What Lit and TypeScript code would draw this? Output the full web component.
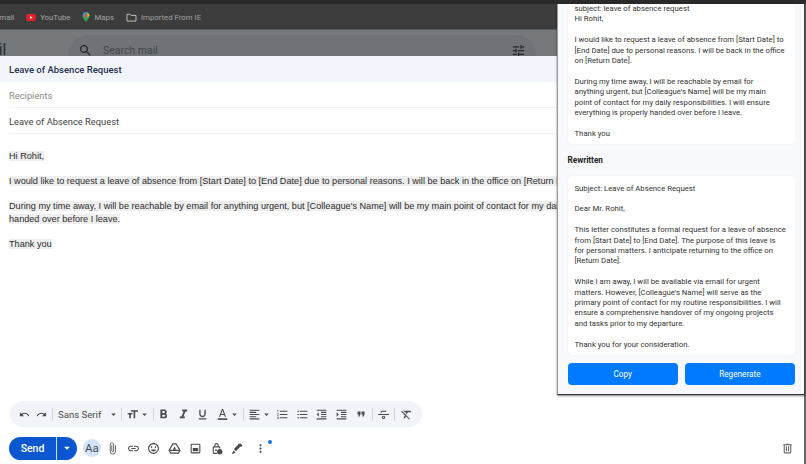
import { LitElement, html, css, svg } from "lit";
import { customElement } from "lit/decorators.js";

const icons: Record<string, any> = {
  undo: svg`<path d="M12.5 8c-2.65 0-5.05.99-6.9 2.6L2 7v9h9l-3.62-3.62c1.39-1.16 3.16-1.88 5.12-1.88 3.54 0 6.55 2.31 7.6 5.5l2.37-.78C21.08 11.03 17.15 8 12.5 8z"/>`,
  redo: svg`<path d="M18.4 10.6C16.55 8.99 14.15 8 11.5 8c-4.65 0-8.58 3.03-9.96 7.22L3.9 16c1.05-3.19 4.05-5.5 7.6-5.5 1.95 0 3.73.72 5.12 1.88L13 16h9V7l-3.6 3.6z"/>`,
  size: svg`<path d="M9 4v3h5v12h3V7h5V4H9zm-6 8h3v7h3v-7h3V9H3v3z"/>`,
  bold: svg`<path d="M15.6 10.79c.97-.67 1.65-1.77 1.65-2.79 0-2.26-1.75-4-4-4H7v14h7.04c2.09 0 3.71-1.7 3.71-3.79 0-1.52-.86-2.82-2.15-3.42zM10 6.5h3c.83 0 1.5.67 1.5 1.5s-.67 1.5-1.5 1.5h-3v-3zm3.5 9H10v-3h3.5c.83 0 1.5.67 1.5 1.5s-.67 1.5-1.5 1.5z"/>`,
  italic: svg`<path d="M10 4v3h2.21l-3.42 8H6v3h8v-3h-2.21l3.42-8H18V4z"/>`,
  underline: svg`<path d="M12 17c3.31 0 6-2.69 6-6V3h-2.5v8c0 1.93-1.57 3.5-3.5 3.5S8.5 12.93 8.5 11V3H6v8c0 3.31 2.69 6 6 6zm-7 2v2h14v-2H5z"/>`,
  color: svg`<path d="M11 2L5.5 16h2.25l1.12-3h6.25l1.12 3h2.25L13 2h-2zm-1.38 9L12 4.67 14.38 11H9.62z"/><path d="M3 19h18v3H3z"/>`,
  align: svg`<path d="M15 15H3v2h12v-2zm0-8H3v2h12V7zM3 13h18v-2H3v2zm0 8h18v-2H3v2zM3 3v2h18V3H3z"/>`,
  numbered: svg`<path d="M2 17h2v.5H3v1h1v.5H2v1h3v-4H2v1zm1-9h1V4H2v1h1v3zm-1 3h1.8L2 13.1v.9h3v-1H3.2L5 10.9V10H2v1zm5-6v2h14V5H7zm0 14h14v-2H7v2zm0-6h14v-2H7v2z"/>`,
  bulleted: svg`<path d="M4 10.5c-.83 0-1.5.67-1.5 1.5s.67 1.5 1.5 1.5 1.5-.67 1.5-1.5-.67-1.5-1.5-1.5zm0-6c-.83 0-1.5.67-1.5 1.5S3.17 7.5 4 7.5 5.5 6.83 5.5 6 4.83 4.5 4 4.5zm0 12c-.83 0-1.5.68-1.5 1.5s.68 1.5 1.5 1.5 1.5-.68 1.5-1.5-.67-1.5-1.5-1.5zM7 19h14v-2H7v2zm0-6h14v-2H7v2zm0-8v2h14V5H7z"/>`,
  outdent: svg`<path d="M11 17h10v-2H11v2zm-8-5l4 4V8l-4 4zm0 9h18v-2H3v2zM3 3v2h18V3H3zm8 6h10V7H11v2zm0 4h10v-2H11v2z"/>`,
  indent: svg`<path d="M3 21h18v-2H3v2zM3 8v8l4-4-4-4zm8 9h10v-2H11v2zM3 3v2h18V3H3zm8 6h10V7H11v2zm0 4h10v-2H11v2z"/>`,
  quote: svg`<path d="M6 17h3l2-4V7H5v6h3zm8 0h3l2-4V7h-6v6h3z"/>`,
  strike: svg`<path d="M2 11h20v2H2z"/><path d="M7 5h10v2.5h-1.6V7H8.6v2H7zM9 15h6v2.5a3 3 0 0 1-6 0zm2 1.5v1a1 1 0 0 0 2 0v-1z"/>`,
  clear: svg`<path d="M3.27 5L2 6.27l6.97 6.97L6.5 19h3l1.57-3.66L16.73 21 18 19.73 3.55 5.27 3.27 5zM6 5v.18L8.82 8h2.4l-.72 1.68 2.1 2.1L14.21 8H20V5H6z"/>`,
  attach: svg`<path d="M16.5 6v11.5c0 2.21-1.79 4-4 4s-4-1.79-4-4V5c0-1.38 1.12-2.5 2.5-2.5s2.5 1.12 2.5 2.5v10.5c0 .55-.45 1-1 1s-1-.45-1-1V6H10v9.5c0 1.38 1.12 2.5 2.5 2.5s2.5-1.12 2.5-2.5V5c0-2.21-1.79-4-4-4S7 2.79 7 5v12.5c0 3.04 2.46 5.5 5.5 5.5s5.5-2.46 5.5-5.5V6h-1.5z"/>`,
  link: svg`<path d="M3.9 12c0-1.71 1.39-3.1 3.1-3.1h4V7H7c-2.76 0-5 2.24-5 5s2.24 5 5 5h4v-1.9H7c-1.71 0-3.1-1.39-3.1-3.1zM8 13h8v-2H8v2zm9-6h-4v1.9h4c1.71 0 3.1 1.39 3.1 3.1s-1.39 3.1-3.1 3.1h-4V17h4c2.76 0 5-2.24 5-5s-2.24-5-5-5z"/>`,
  emoji: svg`<path d="M11.99 2C6.47 2 2 6.48 2 12s4.47 10 9.99 10C17.52 22 22 17.52 22 12S17.52 2 11.99 2zM12 20c-4.42 0-8-3.58-8-8s3.58-8 8-8 8 3.58 8 8-3.58 8-8 8zm3.5-9c.83 0 1.5-.67 1.5-1.5S16.33 8 15.5 8 14 8.67 14 9.5s.67 1.5 1.5 1.5zm-7 0c.83 0 1.5-.67 1.5-1.5S9.33 8 8.5 8 7 8.67 7 9.5 7.67 11 8.5 11zm3.5 6.5c2.33 0 4.31-1.46 5.11-3.5H6.89c.8 2.04 2.78 3.5 5.11 3.5z"/>`,
  drive: svg`<path fill="none" stroke="currentColor" stroke-width="2" stroke-linejoin="round" d="M9 3.500h6L22 15.500l-3 5H5l-3-5z"/><path d="M2 14.500h20v2H2zM12 8.500l3 5.500H9z"/>`,
  photo: svg`<path d="M19 3H5a2 2 0 0 0-2 2v14a2 2 0 0 0 2 2h14a2 2 0 0 0 2-2V5a2 2 0 0 0-2-2zm0 16H5V5h14z"/><path d="M7 11h10v6H7z"/>`,
  lock: svg`<path d="M17 8h-1V6a4 4 0 0 0-8 0v2H7a2 2 0 0 0-2 2v10a2 2 0 0 0 2 2h6v-2H7V10h10v2h2v-2a2 2 0 0 0-2-2zm-3 0h-4V6a2 2 0 0 1 4 0z"/><circle cx="11" cy="15" r="1.6"/><circle cx="18" cy="18" r="5"/>`,
  pen: svg`<path d="M17.6 2.600l3.800 3.800-3 3-.9-.9-8.400 8.400-3.800-3.800 8.400-8.400-.9-.9zM4.600 15.600l3.800 3.800L5 21l-2 1-1-1 1-2z"/>`,
  more: svg`<path d="M12 8c1.1 0 2-.9 2-2s-.9-2-2-2-2 .9-2 2 .9 2 2 2zm0 2c-1.1 0-2 .9-2 2s.9 2 2 2 2-.9 2-2-.9-2-2-2zm0 6c-1.1 0-2 .9-2 2s.9 2 2 2 2-.9 2-2-.9-2-2-2z"/>`,
  trash: svg`<path d="M15 4V3H9v1H4v2h1v13c0 1.1.9 2 2 2h10c1.1 0 2-.9 2-2V6h1V4h-5zm2 15H7V6h10v13zM9 8h2v9H9zm4 0h2v9h-2z"/>`,
  search: svg`<path d="M15.5 14h-.79l-.28-.27C15.41 12.59 16 11.11 16 9.5 16 5.91 13.09 3 9.5 3S3 5.91 3 9.5 5.91 16 9.5 16c1.61 0 3.09-.59 4.23-1.57l.27.28v.79l5 4.99L20.49 19l-4.99-5zm-6 0C7.01 14 5 11.99 5 9.5S7.01 5 9.5 5 14 7.01 14 9.5 11.99 14 9.5 14z"/>`,
  tune: svg`<path d="M3 17v2h6v-2H3zM3 5v2h10V5H3zm10 16v-2h8v-2h-8v-2h-2v6h2zM7 9v2H3v2h4v2h2V9H7zm14 4v-2H11v2h10zm-6-4h2V7h4V5h-4V3h-2v6z"/>`,
  caret: svg`<path d="M7 10l5 5 5-5z"/>`,
};

const icon = (name: string, size = 14) => html`
  <svg class="icon" width=${size} height=${size} viewBox="0 0 24 24" fill="currentColor">${icons[name]}</svg>
`;

// line breaks kept as in the panel, the fallback font wraps differently
const originalText = `subject: leave of absence request
Hi Rohit,

I would like to request a leave of absence from [Start Date] to
[End Date] due to personal reasons. I will be back in the office
on [Return Date].

During my time away, I will be reachable by email for
anything urgent, but [Colleague's Name] will be my main
point of contact for my daily responsibilities. I will ensure
everything is properly handed over before I leave.

Thank you`;

const rewrittenText = `Subject: Leave of Absence Request

Dear Mr. Rohit,

This letter constitutes a formal request for a leave of absence
from [Start Date] to [End Date]. The purpose of this leave is
for personal matters. I anticipate returning to the office on
[Return Date].

While I am away, I will be available via email for urgent
matters. However, [Colleague's Name] will serve as the
primary point of contact for my routine responsibilities. I will
ensure a comprehensive handover of my ongoing projects
and tasks prior to my departure.

Thank you for your consideration.`;

@customElement("app-root")
export class AppRoot extends LitElement {
  static styles = css`
    :host {
      display: block;
      width: 806px;
      height: 464px;
      overflow: hidden;
      font-family: "Liberation Sans", Arial, sans-serif;
    }
    .page {
      position: relative;
      display: flex;
      flex-direction: column;
      height: 464px;
      overflow: hidden;
      background: #fff;
    }
    .icon {
      display: block;
      flex: none;
    }
    .tabstrip {
      height: 4px;
      flex: none;
      background: #2a2a2a;
    }
    .bookmarks {
      height: 26px;
      flex: none;
      box-sizing: border-box;
      display: flex;
      align-items: center;
      gap: 12px;
      background: #3c3c3c;
      color: #a4a4a4;
      font-size: 7.8px;
      font-family: Roboto, sans-serif;
      border-bottom: 1px solid #5a5a5a;
      margin-left: -6px;
      padding-top: 1px;
    }
    .bookmark {
      display: flex;
      align-items: center;
      gap: 4px;
      white-space: nowrap;
    }
    .gmail-bar {
      height: 26px;
      flex: none;
      display: flex;
      background: #75797c;
      overflow: hidden;
      color: #2c2e30;
    }
    .logo {
      width: 106px;
      flex: none;
      margin-left: -38px;
      padding-top: 10px;
      font-size: 17px;
      line-height: 20px;
      color: #2c2e30;
    }
    .search {
      width: 468px;
      height: 40px;
      margin-top: 5px;
      box-sizing: border-box;
      border-radius: 20px;
      background: #6f7377;
      display: flex;
      align-items: flex-start;
      padding: 7.5px 10px 0 10px;
      gap: 10px;
      font-family: Roboto, sans-serif;
      font-size: 10.5px;
      color: #43464a;
    }
    .search span {
      flex: 1;
      line-height: 16px;
    }
    .search .icon {
      color: #24262a;
    }
    .compose {
      flex: 1;
      display: flex;
      flex-direction: column;
      min-height: 0;
      color: #444;
    }
    .compose-title {
      height: 26px;
      flex: none;
      box-sizing: border-box;
      padding-left: 9px;
      display: flex;
      align-items: center;
      background: #f2f6fc;
      color: #1f2f4f;
      font-size: 9.5px;
      font-weight: 500;
      font-family: Roboto, sans-serif;
    }
    .field {
      height: 26px;
      flex: none;
      box-sizing: border-box;
      margin-left: 9px;
      padding-top: 1px;
      display: flex;
      align-items: center;
      border-bottom: 1px solid #f2f2f2;
      font-size: 9.35px;
      font-family: Roboto, sans-serif;
    }
    .field.muted {
      color: #8a8a8a;
    }
    .body {
      flex: 1;
      padding: 16px 0 0 9px;
      font-size: 9.15px;
      line-height: 13px;
      color: #2c2c2c;
      white-space: nowrap;
    }
    .body p {
      margin: 0 0 12px;
    }
    .body span {
      background: #eeeeee;
    }
    .format-bar {
      align-self: flex-start;
      margin-left: 10px;
      height: 26px;
      width: 412px;
      box-sizing: border-box;
      border-radius: 13px;
      background: #f1f4f9;
      display: flex;
      align-items: center;
      padding-left: 6px;
      color: #4a4b4c;
      flex: none;
    }
    .sep {
      width: 1px;
      height: 13px;
      background: #d4d6d9;
      flex: none;
    }
    .sep.tight {
      margin: 0 1px;
    }
    .sep.after-redo {
      margin: 0 5px 0 2px;
    }
    .sep.after-font {
      margin-left: 2.5px;
    }
    .font-name {
      width: 49.5px;
      flex: none;
      font-size: 9.6px;
      font-family: Roboto, sans-serif;
      white-space: nowrap;
    }
    .tool {
      display: flex;
      align-items: center;
      justify-content: center;
      width: 19.6px;
      flex: none;
    }
    .tool.narrow {
      width: 17px;
    }
    .drop {
      display: flex;
      align-items: center;
      flex: none;
      box-sizing: border-box;
      width: 30px;
      padding-left: 3.5px;
    }
    .drop.size {
      width: 31px;
      padding-left: 4px;
    }
    .drop.align {
      width: 29px;
      padding-left: 4px;
    }
    .actions {
      height: 37px;
      flex: none;
      box-sizing: border-box;
      display: flex;
      align-items: center;
      padding: 5px 0 0 9px;
      color: #4a4b4c;
      position: relative;
    }
    .send {
      width: 68px;
      height: 23px;
      flex: none;
      display: flex;
      border-radius: 12px;
      background: #0b57d0;
      color: #fff;
      font-size: 10.5px;
      font-weight: 500;
      font-family: Roboto, sans-serif;
      overflow: hidden;
      margin-right: 6px;
    }
    .send-label {
      flex: 1;
      display: flex;
      align-items: center;
      justify-content: center;
    }
    .send-caret {
      width: 20px;
      display: flex;
      align-items: center;
      justify-content: center;
      border-left: 1px solid #cfe0fa;
    }
    .aa {
      width: 18px;
      height: 18px;
      border-radius: 50%;
      background: #d3e3fd;
      flex: none;
      display: flex;
      align-items: center;
      justify-content: center;
      font-size: 11.5px;
      font-family: Roboto, sans-serif;
      margin-right: 1px;
    }
    .action {
      width: 20.8px;
      display: flex;
      justify-content: center;
      flex: none;
    }
    .action.more {
      margin-left: 3px;
    }
    .dot {
      position: absolute;
      left: 267.5px;
      top: 13px;
      width: 4px;
      height: 4px;
      border-radius: 50%;
      background: #1a73e8;
    }
    .trash {
      position: absolute;
      right: 12.5px;
      top: 14.5px;
      color: #666;
    }
    .edge {
      position: absolute;
      top: 4px;
      bottom: 0;
      right: 0;
      width: 2.5px;
      background: #666;
    }
    .panel {
      position: absolute;
      left: 557px;
      top: 4px;
      width: 248px;
      height: 391px;
      box-sizing: border-box;
      background: #f8f9fc;
      border-left: 1px solid #9a9a9a;
      border-right: 1px solid #444;
      border-bottom: 1px solid #333;
      box-shadow: 0 1px 2px rgba(0, 0, 0, 0.5);
      padding: 0 9px 0 9.5px;
      display: flex;
      flex-direction: column;
      font-family: Roboto, "Open Sans", sans-serif;
      color: #333;
      font-size: 8.2px;
      line-height: 10.4px;
    }
    .box {
      flex: none;
      box-sizing: border-box;
      background: #fff;
      border-radius: 4px;
      padding: 0 7px;
      white-space: pre;
      font-size: 7.75px;
      box-shadow: 0 0 1px rgba(0, 0, 0, 0.12);
    }
    .box.first {
      height: 139.5px;
      border-radius: 0 0 4px 4px;
    }
    .box.second {
      height: 179px;
      padding-top: 7.5px;
    }
    h3 {
      margin: 0;
      height: 32.5px;
      flex: none;
      display: flex;
      align-items: center;
      font-size: 8.2px;
      font-weight: 700;
      color: #222;
    }
    .buttons {
      display: flex;
      gap: 7px;
      margin-top: 7.7px;
    }
    button {
      flex: 1;
      height: 22px;
      border: none;
      border-radius: 4px;
      background: #007bff;
      color: #fff;
      font: inherit;
      padding: 1px 0 0;
    }
  `;

  render() {
    return html`
      <div class="page">
        <div class="tabstrip"></div>
        <div class="bookmarks">
          <div class="bookmark">Gmail</div>
          <div class="bookmark">
            <svg width="10" height="7" viewBox="0 0 11 8"><rect width="11" height="8" rx="2" fill="#e8202a"/><path d="M4.5 2.4v3.2L7.2 4z" fill="#fff"/></svg>
            YouTube
          </div>
          <div class="bookmark">
            <svg width="8" height="10" viewBox="0 0 9 11"><path d="M4.5 0a4 4 0 0 1 4 4c0 2.6-2.6 4-4 7-1.400-3-4-4.400-4-7a4 4 0 0 1 4-4z" fill="#34a853"/><path d="M1 2l3-2 2 .2L1.500 6z" fill="#4285f4"/><path d="M6 .3 8.500 3.500 6 5.500z" fill="#fbbc04"/><circle cx="4.500" cy="4" r="1.500" fill="#ea4335"/></svg>
            Maps
          </div>
          <div class="bookmark">
            <svg width="11" height="9" viewBox="0 0 12 10"><path d="M1 1.500h3.500l1 1.200H11v6.300H1z" fill="none" stroke="#c8c8c8"/></svg>
            Imported From IE
          </div>
        </div>
        <div class="gmail-bar">
          <div class="logo">Gmail</div>
          <div class="search">
            ${icon("search", 15)}
            <span>Search mail</span>
            ${icon("tune", 15)}
          </div>
        </div>
        <div class="compose">
          <div class="compose-title">Leave of Absence Request</div>
          <div class="field muted">Recipients</div>
          <div class="field">Leave of Absence Request</div>
          <div class="body">
            <p><span>Hi Rohit,</span></p>
            <p><span>I would like to request a leave of absence from [Start Date] to [End Date] due to personal reasons. I will be back in the office on [Return Date].</span></p>
            <p><span>During my time away, I will be reachable by email for anything urgent, but [Colleague's Name] will be my main point of contact for my daily responsibilities. I will ensure everything is properly</span><br /><span>handed over before I leave.</span></p>
            <p><span>Thank you</span></p>
          </div>
          <div class="format-bar">
            <div class="tool narrow">${icon("undo", 11)}</div>
            <div class="tool narrow">${icon("redo", 11)}</div>
            <div class="sep after-redo"></div>
            <div class="font-name">Sans Serif</div>
            ${icon("caret", 11)}
            <div class="sep after-font"></div>
            <div class="drop size">${icon("size", 13)}${icon("caret", 11)}</div>
            <div class="sep"></div>
            <div class="tool">${icon("bold", 15)}</div>
            <div class="tool">${icon("italic", 15)}</div>
            <div class="tool">${icon("underline", 13)}</div>
            <div class="drop">${icon("color", 13)}${icon("caret", 11)}</div>
            <div class="sep"></div>
            <div class="drop align">${icon("align", 13)}${icon("caret", 11)}</div>
            <div class="tool">${icon("numbered", 13)}</div>
            <div class="tool">${icon("bulleted", 13)}</div>
            <div class="tool">${icon("outdent", 13)}</div>
            <div class="tool">${icon("indent", 13)}</div>
            <div class="tool">${icon("quote", 12)}</div>
            <div class="sep tight"></div>
            <div class="tool">${icon("strike", 13)}</div>
            <div class="sep tight"></div>
            <div class="tool">${icon("clear", 13)}</div>
          </div>
          <div class="actions">
            <div class="send">
              <div class="send-label">Send</div>
              <div class="send-caret">${icon("caret", 14)}</div>
            </div>
            <div class="aa">Aa</div>
            <div class="action">${icon("attach", 13)}</div>
            <div class="action">${icon("link", 13)}</div>
            <div class="action">${icon("emoji", 13)}</div>
            <div class="action">${icon("drive", 13)}</div>
            <div class="action">${icon("photo", 13)}</div>
            <div class="action">${icon("lock", 13)}</div>
            <div class="action">${icon("pen", 13)}</div>
            <div class="action more">${icon("more", 13)}</div>
            <div class="dot"></div>
            <div class="trash">${icon("trash", 13)}</div>
          </div>
        </div>
        <div class="edge"></div>
        <div class="panel">
          <div class="box first">${originalText}</div>
          <h3>Rewritten</h3>
          <div class="box second">${rewrittenText}</div>
          <div class="buttons">
            <button>Copy</button>
            <button>Regenerate</button>
          </div>
        </div>
      </div>
    `;
  }
}
